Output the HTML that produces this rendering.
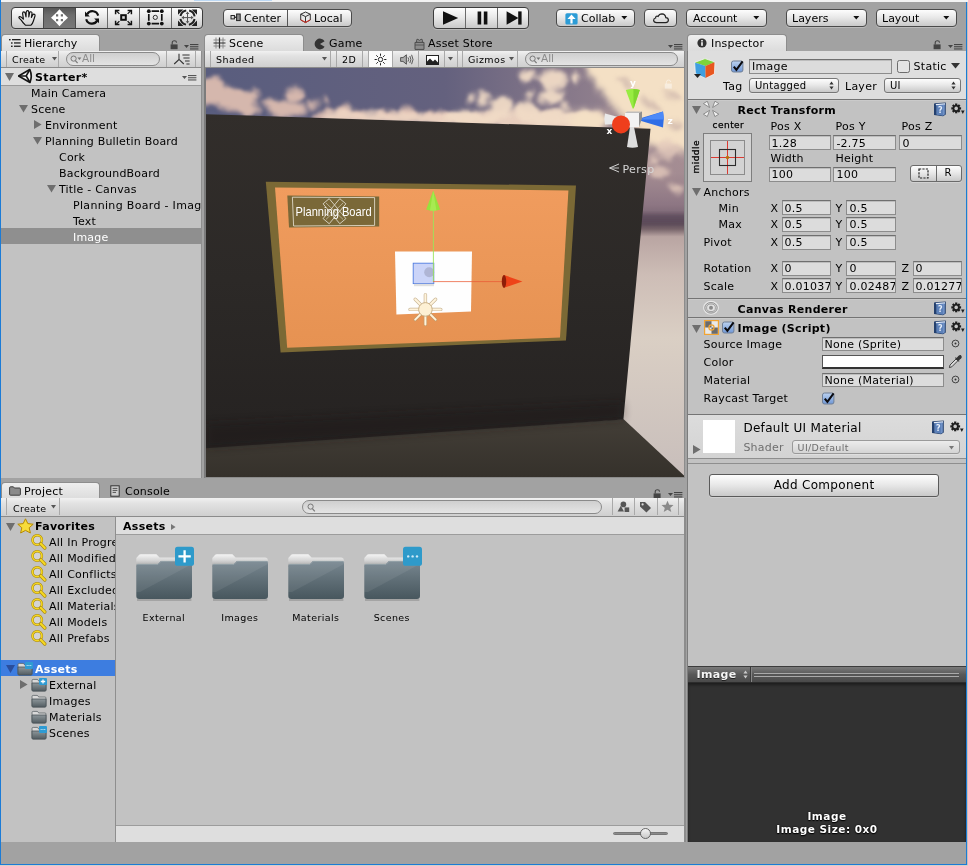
<!DOCTYPE html>
<html>
<head>
<meta charset="utf-8">
<title>Unity - Starter</title>
<style>
html,body{margin:0;padding:0}
body{width:968px;height:866px;position:relative;overflow:hidden;background:#a2a2a2;
 font-family:"DejaVu Sans","Liberation Sans",sans-serif;font-size:11px;color:#000;line-height:1;will-change:transform}
div,span,svg{position:absolute;box-sizing:border-box}
.t{white-space:nowrap;line-height:13px;height:13px}
.b{font-weight:bold}
.s9{font-size:9px}
.s10{font-size:10px}
.btn{border:1px solid #4a4a4a;border-radius:4px;background:linear-gradient(#fdfdfd,#e9e9e9 45%,#c9c9c9);box-shadow:0 1px 0 rgba(255,255,255,.25)}
.panel{background:#c2c2c2}
.tbar{background:linear-gradient(#f1f1f1,#e2e2e2 30%,#cfcfcf);border-bottom:1px solid #8b8b8b}
.tab{background:linear-gradient(#eeeeee,#dcdcdc);border:1px solid #8d8d8d;border-bottom:none;border-radius:4px 4px 0 0}
.fld{background:#dcdcdc;border:1px solid #8c8c8c;border-top-color:#6f6f6f;box-shadow:inset 0 1px 0 #bdbdbd}
.sep{background:#8e8e8e;width:1px}
.srch{background:linear-gradient(#cfcfcf,#e4e4e4);border:1px solid #8a8a8a;border-radius:7px}
.row{left:0;width:100%;height:16px}
</style>
</head>
<body>
<!-- MAIN TOOLBAR -->
<div id="toolbar" style="left:1px;top:2px;width:967px;height:32px">
<!-- transform tools -->
<div class="btn" style="left:10px;top:5px;width:192px;height:22px;overflow:hidden;border-color:#3c3c3c">
 <div style="left:31px;top:0;width:33px;height:20px;background:linear-gradient(#565656,#6c6c6c 35%,#787878)"></div>
 <div class="sep" style="left:31px;top:0;height:20px;background:#4a4a4a"></div>
 <div class="sep" style="left:63px;top:0;height:20px;background:#4a4a4a"></div>
 <div class="sep" style="left:95px;top:0;height:20px;background:#6a6a6a"></div>
 <div class="sep" style="left:127px;top:0;height:20px;background:#6a6a6a"></div>
 <div class="sep" style="left:159px;top:0;height:20px;background:#6a6a6a"></div>
 <svg style="left:0;top:0" width="190" height="20" viewBox="12 8 190 20">
  <!-- hand -->
  <path d="M25.4 25.2 Q23 23 21.4 20.4 L19.2 18.2 Q18.4 16.8 19.8 16.6 Q21 16.6 22.2 18 L23.4 19.2 L22.6 13.4 Q22.6 11.8 23.8 11.8 Q24.8 11.8 25.2 13.2 L26 17 L26.2 12 Q26.4 10.6 27.6 10.6 Q28.8 10.6 28.8 12 L28.8 17 L29.6 12.8 Q30 11.6 31 11.8 Q32.2 12 32 13.4 L31.4 17.4 L32.8 14.8 Q33.4 13.8 34.4 14.2 Q35.4 14.8 35 16 L33.4 21 Q32.6 23.6 31 25.2Z" fill="none" stroke="#111" stroke-width="1.15" stroke-linejoin="round"/>
  <!-- move -->
  <g transform="translate(59.5 17.7)"><path d="M0 -8.5 L4.6 -3.5 H1.3 V-1.3 H3.5 V-4.6 L8.5 0 L3.5 4.6 V1.3 H1.3 V3.5 H4.6 L0 8.5 L-4.6 3.5 H-1.3 V1.3 H-3.5 V4.6 L-8.5 0 L-3.5 -4.6 V-1.3 H-1.3 V-3.5 H-4.6Z" fill="#fff"/></g>
  <!-- rotate -->
  <g fill="none" stroke="#111" stroke-width="2.2">
   <path d="M87.2 14.2 A6 6 0 0 1 98.2 15.6"/>
   <path d="M97.2 20.6 A6 6 0 0 1 86.2 19.2"/>
  </g>
  <path d="M85 11.6 V16.4 H89.8Z" fill="#111"/>
  <path d="M99 23.2 V18.4 H94.2Z" fill="#111"/>
  <!-- scale -->
  <rect x="121.2" y="15.2" width="4.6" height="4.6" fill="#ddd" stroke="#111" stroke-width="2"/>
  <g fill="none" stroke="#111" stroke-width="1.3">
   <path d="M116.4 10.9 L119.4 13.9 M130.6 10.9 L127.6 13.9 M116.4 24.1 L119.4 21.1 M130.6 24.1 L127.6 21.1"/>
   <path d="M115.6 14.2 V10.4 H119.4 M131.4 14.2 V10.4 H127.6 M115.6 20.8 V24.6 H119.4 M131.4 20.8 V24.6 H127.6" stroke-width="1.5"/>
  </g>
  <!-- rect -->
  <g fill="none" stroke="#111">
   <path d="M151.6 11.2 H159 M151.6 23.6 H159 M148.8 14 V20.8 M161.8 14 V20.8" stroke-width="1.7"/>
   <circle cx="155.3" cy="17.4" r="2.1" stroke-width="1" stroke="#333"/>
  </g>
  <g fill="#111"><circle cx="148.8" cy="11.2" r="1.9"/><circle cx="161.8" cy="11.2" r="1.9"/><circle cx="148.8" cy="23.6" r="1.9"/><circle cx="161.8" cy="23.6" r="1.9"/></g>
  <!-- combined -->
  <g fill="none" stroke="#222">
   <circle cx="187.5" cy="17.6" r="7.2" stroke-width="2" stroke-dasharray="8.3 3" stroke-dashoffset="-1.5"/>
   <path d="M187.5 13 V22.2 M182.9 17.6 H192.1" stroke-width="1" stroke="#555"/>
  </g>
  <g fill="#222"><path d="M178 9.4 H183.4 L178 14.8Z M197 9.4 H191.6 L197 14.8Z M178 26 H183.4 L178 20.6Z M197 26 H191.6 L197 20.6Z"/>
   <path d="M187.5 11.6 L189.3 14 H185.7Z M187.5 23.6 L189.3 21.2 H185.7Z M181.5 17.6 L183.9 15.8 V19.4Z M193.5 17.6 L191.1 15.8 V19.4Z" fill="#555"/></g>
 </svg>
</div>
<!-- center / local -->
<div class="btn" style="left:222px;top:7px;width:129px;height:18px"></div>
<div class="sep" style="left:286px;top:8px;height:16px;background:#555"></div>
<svg style="left:229px;top:11px" width="12" height="10" viewBox="0 0 12 10"><rect x="1" y="2.5" width="3.4" height="3.4" fill="#ddd" stroke="#222" stroke-width="1"/><rect x="4.4" y="3.6" width="2" height="1.3" fill="#222"/><rect x="6.6" y="1" width="3.6" height="6.6" fill="#8a8a8a" stroke="#222" stroke-width="1"/></svg>
<span class="t" style="left:243px;top:10px">Center</span>
<svg style="left:298px;top:9px" width="13" height="13" viewBox="0 0 13 13"><path d="M6.5 1 L11.3 3.2 V9 L6.5 11.6 L1.7 9 V3.2Z" fill="#e8e8e8" stroke="#333" stroke-width="1"/><path d="M1.7 3.2 L6.5 5.6 L11.3 3.2 M6.5 5.6 V11.4" fill="none" stroke="#333" stroke-width="1"/><path d="M1.7 8.2 L6.5 10.8 L11.3 8.2 V9.3 L6.5 12 L1.7 9.3Z" fill="#d9362b"/></svg>
<span class="t" style="left:313px;top:10px">Local</span>
<!-- play controls -->
<div class="btn" style="left:432px;top:5px;width:96px;height:22px;border-color:#3c3c3c"></div>
<div class="sep" style="left:464px;top:6px;height:20px;background:#6a6a6a"></div>
<div class="sep" style="left:496px;top:6px;height:20px;background:#6a6a6a"></div>
<svg style="left:433px;top:6px" width="96" height="21" viewBox="0 0 96 21"><g fill="#111"><path d="M9 3.2 L24.2 10 L9 16.8Z"/><rect x="43.6" y="3.5" width="3.6" height="13"/><rect x="49.8" y="3.5" width="3.6" height="13"/><path d="M72.6 3.2 L84.4 10 L72.6 16.8Z"/><rect x="84.2" y="3.4" width="3.4" height="13.2"/></g></svg>
<!-- collab -->
<div class="btn" style="left:555px;top:7px;width:79px;height:18px"></div>
<svg style="left:563.6px;top:10.6px" width="13" height="12" viewBox="0 0 13 12"><rect x="0.4" y="0.2" width="12.2" height="11.4" rx="1.6" fill="#2c9cd6"/><path d="M6.5 1.6 L10.6 6 H7.6 V10.4 H5.4 V6 H2.4Z" fill="#fff"/></svg>
<span class="t" style="left:580px;top:10px">Collab</span>
<svg style="left:620px;top:14px" width="7" height="4" viewBox="0 0 7 4"><path d="M0.3 0 H6.3 L3.3 3.6Z" fill="#111"/></svg>
<!-- cloud -->
<div class="btn" style="left:643px;top:7px;width:33px;height:18px"></div>
<svg style="left:651px;top:10px" width="18" height="12" viewBox="0 0 18 12"><path d="M4.6 10.6 H13.6 Q16.4 10.4 16.4 8 Q16.2 5.8 13.8 5.6 Q13.4 2 10 1.8 Q7.2 1.8 6.2 4.4 Q5.4 3.8 4.4 4.2 Q3.4 4.8 3.6 6 Q1.6 6.4 1.6 8.4 Q1.8 10.4 4.6 10.6Z" fill="none" stroke="#222" stroke-width="1.2"/></svg>
<!-- account / layers / layout -->
<div class="btn" style="left:685px;top:7px;width:81px;height:18px"></div>
<span class="t" style="left:692px;top:10px">Account</span>
<svg style="left:752px;top:14px" width="7" height="4" viewBox="0 0 7 4"><path d="M0.3 0 H6.3 L3.3 3.6Z" fill="#111"/></svg>
<div class="btn" style="left:785px;top:7px;width:81px;height:18px"></div>
<span class="t" style="left:791px;top:10px">Layers</span>
<svg style="left:852px;top:14px" width="7" height="4" viewBox="0 0 7 4"><path d="M0.3 0 H6.3 L3.3 3.6Z" fill="#111"/></svg>
<div class="btn" style="left:875px;top:7px;width:81px;height:18px"></div>
<span class="t" style="left:881px;top:10px">Layout</span>
<svg style="left:942px;top:14px" width="7" height="4" viewBox="0 0 7 4"><path d="M0.3 0 H6.3 L3.3 3.6Z" fill="#111"/></svg>
</div>
<!-- HIERARCHY -->
<div id="hier" style="left:1px;top:34px;width:202px;height:445px">
<div class="tab" style="left:0;top:0;width:99px;height:17px"></div>
<svg style="left:8px;top:5px" width="12" height="9" viewBox="0 0 12 9"><g fill="#222"><rect x="0" y="0" width="1.6" height="1.4"/><rect x="3" y="0" width="8.6" height="1.3"/><rect x="2" y="3.3" width="1.6" height="1.4"/><rect x="5" y="3.3" width="6.6" height="1.3"/><rect x="2" y="6.6" width="1.6" height="1.4"/><rect x="5" y="6.6" width="6.6" height="1.3"/></g></svg>
<span class="t" style="left:23px;top:3px">Hierarchy</span>
<svg style="left:169px;top:6px" width="9" height="10" viewBox="0 0 9 10"><path d="M2.2 4.6 V2.8 Q2.2 0.8 4.4 0.8 Q6.4 0.8 6.6 2.6" fill="none" stroke="#444" stroke-width="1.1"/><rect x="0.6" y="4.4" width="7" height="4.8" fill="#444"/></svg>
<svg style="left:183px;top:10px" width="15" height="6" viewBox="0 0 15 6"><path d="M0 1 H5 L2.5 4Z" fill="#444"/><g fill="#444"><rect x="6" y="0" width="8.4" height="1.1"/><rect x="6" y="2.2" width="8.4" height="1.1"/><rect x="6" y="4.4" width="8.4" height="1.1"/></g></svg>
<div style="left:200px;top:17px;width:1px;height:427px;background:#8f8f8f"></div>
<div class="panel" style="left:0;top:17px;width:200px;height:427px;overflow:hidden">
 <div class="tbar" style="left:0;top:0;width:200px;height:17px"></div>
 <div class="sep" style="left:5px;top:0;height:16px;background:#a9a9a9"></div>
 <span class="t s9" style="left:11px;top:2px;font-size:9.5px;letter-spacing:.3px">Create</span>
 <svg style="left:51px;top:6px" width="5" height="4" viewBox="0 0 5 4"><path d="M0 0 H5 L2.5 3.4Z" fill="#555"/></svg>
 <div class="sep" style="left:57px;top:0;height:16px;background:#a9a9a9"></div>
 <div class="srch" style="left:65px;top:1px;width:94px;height:14px"></div>
 <svg style="left:69px;top:4px" width="12" height="9" viewBox="0 0 12 9"><circle cx="3.6" cy="3.6" r="2.6" fill="none" stroke="#777" stroke-width="1"/><path d="M5.4 5.6 L7.6 8.2" stroke="#777" stroke-width="1.2"/><path d="M7.4 2.6 H11.4 L9.4 5Z" fill="#777"/></svg>
 <span class="t" style="left:81px;top:1px;color:#8c8c8c;font-size:10.5px">All</span>
 <div class="sep" style="left:165px;top:0;height:16px;background:#a9a9a9"></div>
 <svg style="left:172px;top:2px" width="18" height="13" viewBox="0 0 18 13"><g fill="none" stroke="#333" stroke-width="1.1"><path d="M6 0.8 V6.4 L1.2 11 M6 6.4 L10.8 11"/><path d="M9.4 2 H16.6 M10.4 5 H16.6 M12 8 H16.6 M13.4 11 H16.6"/></g></svg>
 <div class="sep" style="left:194px;top:0;height:16px;background:#a9a9a9"></div>
 <!-- scene header row -->
 <div style="left:0;top:17px;width:200px;height:18px;background:#dedede;border-bottom:1px solid #9a9a9a"></div>
 <svg style="left:4px;top:22px" width="9" height="8" viewBox="0 0 9 8"><path d="M0 0 H9 L4.5 8Z" fill="#6e6e6e"/></svg>
 <svg style="left:17px;top:17px" width="16" height="16" viewBox="18 68 16 16"><path d="M18.6 76 L29.8 69.6 Q32.6 76 30 82.4Z" fill="#f6f6f6" stroke="#151515" stroke-width="1.7" stroke-linejoin="round"/><path d="M18.6 76 H26.2 L29.8 69.6 M26.2 76 L30 82.4" fill="none" stroke="#151515" stroke-width="1.6"/></svg>
 <span class="t b" style="left:34px;top:20px;letter-spacing:.35px">Starter*</span>
 <svg style="left:181px;top:24px" width="15" height="6" viewBox="0 0 15 6"><path d="M0 1 H5 L2.5 4Z" fill="#555"/><g fill="#555"><rect x="6" y="0" width="8.4" height="1.1"/><rect x="6" y="2.2" width="8.4" height="1.1"/><rect x="6" y="4.4" width="8.4" height="1.1"/></g></svg>
 <span class="t" style="left:30px;top:36px;letter-spacing:.2px">Main Camera</span>
 <svg style="left:18px;top:54px" width="9" height="8" viewBox="0 0 9 8"><path d="M0 0 H9 L4.5 7.6Z" fill="#6e6e6e"/></svg>
 <span class="t" style="left:30px;top:52px;letter-spacing:.2px">Scene</span>
 <svg style="left:33px;top:69px" width="8" height="9" viewBox="0 0 8 9"><path d="M0 0 V9 L7.6 4.5Z" fill="#6e6e6e"/></svg>
 <span class="t" style="left:44px;top:68px;letter-spacing:.2px">Environment</span>
 <svg style="left:32px;top:86px" width="9" height="8" viewBox="0 0 9 8"><path d="M0 0 H9 L4.5 7.6Z" fill="#6e6e6e"/></svg>
 <span class="t" style="left:44px;top:84px;letter-spacing:.2px">Planning Bulletin Board</span>
 <span class="t" style="left:58px;top:100px;letter-spacing:.2px">Cork</span>
 <span class="t" style="left:58px;top:116px;letter-spacing:.2px">BackgroundBoard</span>
 <svg style="left:46px;top:134px" width="9" height="8" viewBox="0 0 9 8"><path d="M0 0 H9 L4.5 7.6Z" fill="#6e6e6e"/></svg>
 <span class="t" style="left:58px;top:132px;letter-spacing:.2px">Title - Canvas</span>
 <span class="t" style="left:72px;top:148px;letter-spacing:.32px">Planning Board - Image</span>
 <span class="t" style="left:72px;top:164px;letter-spacing:.2px">Text</span>
 <div style="left:0;top:177px;width:200px;height:16px;background:#8f8f8f"></div>
 <span class="t" style="left:72px;top:180px;letter-spacing:.2px;color:#fff">Image</span>
</div>
</div>
<!-- SCENE -->
<div id="scene" style="left:205px;top:34px;width:481px;height:445px">
<!-- tabs -->
<div class="tab" style="left:-1px;top:0;width:100px;height:17px"></div>
<svg style="left:8px;top:3px" width="13" height="13" viewBox="213 37 13 13"><path d="M216 37.5 V48.5 M223 37.5 V48.5 M213.5 40 H225.5 M213.5 46 H225.5" stroke="#8a8a8a" stroke-width="1" fill="none"/><path d="M219.5 37.5 V48.5 M213.5 43 H225.5" stroke="#2e2e2e" stroke-width="1.2" fill="none"/></svg>
<span class="t" style="left:24px;top:3px;letter-spacing:.2px">Scene</span>
<svg style="left:109px;top:4px" width="12" height="12" viewBox="0 0 12 12"><path d="M6 6 L10.6 3.2 A5.4 5.4 0 1 0 10.6 8.8Z" fill="#333"/></svg>
<span class="t" style="left:124px;top:3px;letter-spacing:.2px">Game</span>
<svg style="left:209px;top:4px" width="11" height="12" viewBox="0 0 11 12"><path d="M1 4.4 H10 V11.4 H1Z M2.6 4.4 V2.2 Q2.6 0.8 4 1.4 L5.4 2.4 L7 1.4 Q8.4 0.8 8.4 2.2 V4.4" fill="#8d8d8d" stroke="#4d4d4d" stroke-width="1"/><path d="M1 7 H10" stroke="#4d4d4d" stroke-width=".8"/></svg>
<span class="t" style="left:223px;top:3px;letter-spacing:.2px">Asset Store</span>
<svg style="left:463px;top:10px" width="15" height="6" viewBox="0 0 15 6"><path d="M0 1 H5 L2.5 4Z" fill="#444"/><g fill="#444"><rect x="6" y="0" width="8.4" height="1.1"/><rect x="6" y="2.2" width="8.4" height="1.1"/><rect x="6" y="4.4" width="8.4" height="1.1"/></g></svg>
<div style="left:-1px;top:17px;width:2px;height:427px;background:#7c7c7c"></div>
<div style="left:479px;top:17px;width:1px;height:427px;background:#8c8c8c"></div>
<div style="left:0;top:443px;width:480px;height:1px;background:#8c8c8c"></div>
<!-- toolbar -->
<div class="tbar" style="left:0;top:17px;width:479px;height:17px"></div>
<div class="sep" style="left:5px;top:17px;height:16px;background:#a9a9a9"></div>
<span class="t" style="left:11px;top:19px;font-size:9.5px;letter-spacing:.45px">Shaded</span>
<svg style="left:117px;top:23px" width="5" height="4" viewBox="0 0 5 4"><path d="M0 0 H5 L2.5 3.4Z" fill="#555"/></svg>
<div class="sep" style="left:125px;top:17px;height:16px;background:#a9a9a9"></div>
<div class="sep" style="left:131px;top:17px;height:16px;background:#a9a9a9"></div>
<span class="t" style="left:137px;top:19px;font-size:9.5px;letter-spacing:.45px">2D</span>
<div class="sep" style="left:157px;top:17px;height:16px;background:#a9a9a9"></div>
<div style="left:163px;top:17px;width:25px;height:16px;background:#fbfbfb;border-left:1px solid #a9a9a9;border-right:1px solid #a9a9a9"></div>
<svg style="left:169px;top:19px" width="13" height="13" viewBox="0 0 13 13"><circle cx="6.5" cy="6.5" r="2.2" fill="none" stroke="#222" stroke-width="1"/><g stroke="#222" stroke-width="1"><path d="M6.5 0.6 V2.8 M6.5 10.2 V12.4 M0.6 6.5 H2.8 M10.2 6.5 H12.4 M2.3 2.3 L3.9 3.9 M9.1 9.1 L10.7 10.7 M2.3 10.7 L3.9 9.1 M9.1 3.9 L10.7 2.3"/></g></svg>
<svg style="left:195px;top:20px" width="14" height="11" viewBox="0 0 14 11"><path d="M0.6 3.6 H3 L6.4 0.8 V10.2 L3 7.4 H0.6Z" fill="#ababab" stroke="#4a4a4a" stroke-width=".9"/><path d="M8 3.4 Q9.4 5.5 8 7.6 M9.8 2 Q12 5.5 9.8 9 M11.6 0.8 Q14.4 5.5 11.6 10.2" fill="none" stroke="#4a4a4a" stroke-width=".9"/></svg>
<div class="sep" style="left:213px;top:17px;height:16px;background:#a9a9a9"></div>
<svg style="left:221px;top:21px" width="13" height="10" viewBox="0 0 13 10"><rect x="0.5" y="0.5" width="12" height="9" fill="#fff" stroke="#222" stroke-width="1"/><path d="M1 9 V6.4 L4 3.4 L7 6.4 L9 4.6 L12 7.4 V9Z" fill="#222"/></svg>
<div class="sep" style="left:239px;top:17px;height:16px;background:#a9a9a9"></div>
<svg style="left:243px;top:23px" width="5" height="4" viewBox="0 0 5 4"><path d="M0 0 H5 L2.5 3.4Z" fill="#555"/></svg>
<div class="sep" style="left:252px;top:17px;height:16px;background:#a9a9a9"></div>
<div class="sep" style="left:257px;top:17px;height:16px;background:#a9a9a9"></div>
<span class="t" style="left:263px;top:19px;font-size:9.5px;letter-spacing:.45px">Gizmos</span>
<svg style="left:304px;top:23px" width="5" height="4" viewBox="0 0 5 4"><path d="M0 0 H5 L2.5 3.4Z" fill="#555"/></svg>
<div class="sep" style="left:312px;top:17px;height:16px;background:#a9a9a9"></div>
<div class="srch" style="left:320px;top:18px;width:153px;height:14px"></div>
<svg style="left:324px;top:21px" width="12" height="9" viewBox="0 0 12 9"><circle cx="3.6" cy="3.6" r="2.6" fill="none" stroke="#777" stroke-width="1"/><path d="M5.4 5.6 L7.6 8.2" stroke="#777" stroke-width="1.2"/><path d="M7.4 2.6 H11.4 L9.4 5Z" fill="#777"/></svg>
<span class="t" style="left:336px;top:18px;color:#8c8c8c;font-size:10.5px">All</span>

<!-- scene view -->
<svg style="left:1px;top:34px" width="478" height="409" viewBox="206 68 478 409">
 <defs>
  <linearGradient id="sky" x1="206" y1="0" x2="684" y2="0" gradientUnits="userSpaceOnUse">
   <stop offset="0" stop-color="#595d7e"/><stop offset=".5" stop-color="#64617e"/><stop offset=".74" stop-color="#857789"/><stop offset="1" stop-color="#a48e94"/>
  </linearGradient>
  <linearGradient id="skyv" x1="0" y1="120" x2="0" y2="226" gradientUnits="userSpaceOnUse">
   <stop offset="0" stop-color="#a89096" stop-opacity="0"/><stop offset=".5" stop-color="#a48c92" stop-opacity=".9"/><stop offset=".8" stop-color="#8d7683" stop-opacity="1"/><stop offset="1" stop-color="#6a5866" stop-opacity="1"/>
  </linearGradient>
  <linearGradient id="gnd" x1="0" y1="224" x2="0" y2="477" gradientUnits="userSpaceOnUse">
   <stop offset="0" stop-color="#5f4e5a"/><stop offset=".02" stop-color="#77646a"/><stop offset=".05" stop-color="#b9a5a2"/><stop offset=".2" stop-color="#cdbdb6"/><stop offset=".45" stop-color="#dacfc4"/><stop offset="1" stop-color="#c8bebb"/>
  </linearGradient>
  <linearGradient id="wall" x1="0" y1="110" x2="0" y2="450" gradientUnits="userSpaceOnUse">
   <stop offset="0" stop-color="#322e2b"/><stop offset=".5" stop-color="#2c2927"/><stop offset="1" stop-color="#252221"/>
  </linearGradient>
  <linearGradient id="floor" x1="0" y1="420" x2="0" y2="477" gradientUnits="userSpaceOnUse">
   <stop offset="0" stop-color="#433e37"/><stop offset="1" stop-color="#35312b"/>
  </linearGradient>
  <linearGradient id="cork" x1="0" y1="187" x2="0" y2="348" gradientUnits="userSpaceOnUse">
   <stop offset="0" stop-color="#f09c5e"/><stop offset="1" stop-color="#e69252"/>
  </linearGradient>
  <filter id="b4" x="-30%" y="-30%" width="160%" height="160%"><feGaussianBlur stdDeviation="4"/></filter>
  <filter id="b2" x="-30%" y="-30%" width="160%" height="160%"><feGaussianBlur stdDeviation="2.2"/></filter>
  <filter id="b1" x="-30%" y="-30%" width="160%" height="160%"><feGaussianBlur stdDeviation="1"/></filter>
  <filter id="cl" x="-10%" y="-40%" width="120%" height="180%"><feTurbulence type="fractalNoise" baseFrequency="0.07" numOctaves="3" seed="4" result="n"/><feDisplacementMap in="SourceGraphic" in2="n" scale="16" xChannelSelector="R" yChannelSelector="G"/><feGaussianBlur stdDeviation="1.5"/></filter>
  <filter id="cl2" filterUnits="userSpaceOnUse" x="196" y="58" width="500" height="180">
   <feTurbulence type="fractalNoise" baseFrequency="0.035 0.055" numOctaves="3" seed="11" result="n"/>
   <feColorMatrix in="n" type="matrix" values="0 0 0 0 1  0 0 0 0 1  0 0 0 0 1  2.2 0 0 0 -0.45" result="na"/>
   <feGaussianBlur in="SourceGraphic" stdDeviation="3.5" result="m"/>
   <feComposite in="na" in2="m" operator="arithmetic" k1="1" k2="0" k3="0" k4="0" result="c"/>
   <feComponentTransfer in="c"><feFuncA type="linear" slope="3" intercept="-0.45"/></feComponentTransfer>
   <feGaussianBlur stdDeviation="1.1"/>
  </filter>
  <filter id="cl3" filterUnits="userSpaceOnUse" x="196" y="58" width="500" height="180">
   <feTurbulence type="fractalNoise" baseFrequency="0.04 0.06" numOctaves="4" seed="3" result="n"/>
   <feColorMatrix in="n" type="matrix" values="0 0 0 0 1  0 0 0 0 1  0 0 0 0 1  2.0 0 0 0 0.15" result="na"/>
   <feGaussianBlur in="SourceGraphic" stdDeviation="4" result="m"/>
   <feComposite in="na" in2="m" operator="arithmetic" k1="1" k2="0" k3="0" k4="0" result="c"/>
   <feComponentTransfer in="c"><feFuncA type="linear" slope="3" intercept="-0.5"/></feComponentTransfer>
   <feGaussianBlur stdDeviation="1.2"/>
  </filter>
  <filter id="cw" filterUnits="userSpaceOnUse" x="196" y="58" width="500" height="180"><feGaussianBlur in="SourceGraphic" stdDeviation="2" result="m"/><feTurbulence type="fractalNoise" baseFrequency="0.07" numOctaves="2" seed="5" result="n"/><feDisplacementMap in="m" in2="n" scale="9" xChannelSelector="R" yChannelSelector="G"/><feGaussianBlur stdDeviation=".8"/></filter>
  <filter id="cw2" filterUnits="userSpaceOnUse" x="196" y="58" width="500" height="180"><feGaussianBlur in="SourceGraphic" stdDeviation="3.2" result="m"/><feTurbulence type="fractalNoise" baseFrequency="0.05" numOctaves="2" seed="9" result="n"/><feDisplacementMap in="m" in2="n" scale="14" xChannelSelector="R" yChannelSelector="G"/><feGaussianBlur stdDeviation="1"/></filter>
  <clipPath id="vp"><rect x="206" y="68" width="478" height="409"/></clipPath>
 </defs>
 <g clip-path="url(#vp)">
 <!-- sky -->
 <rect x="206" y="68" width="478" height="160" fill="url(#sky)"/>
 <rect x="560" y="120" width="130" height="110" fill="url(#skyv)"/>
 <!-- clouds -->
 <g filter="url(#cw)" fill="#7b7088" opacity=".55" transform="translate(1.5,3)"><ellipse cx="209.7" cy="89" rx="12" ry="14"/><ellipse cx="227" cy="96.5" rx="16" ry="11"/><ellipse cx="243" cy="101.5" rx="12" ry="10"/><ellipse cx="253" cy="92.8" rx="5" ry="5"/><ellipse cx="247" cy="109" rx="10" ry="6"/><ellipse cx="292.7" cy="92.8" rx="11" ry="6.5"/><ellipse cx="268" cy="102" rx="8" ry="5"/><ellipse cx="285.3" cy="107.7" rx="20" ry="8"/><ellipse cx="311.3" cy="102.7" rx="5" ry="4"/><ellipse cx="318.8" cy="115.7" rx="8" ry="4"/><ellipse cx="323.7" cy="99" rx="3" ry="3"/><ellipse cx="327" cy="111" rx="4" ry="5"/><ellipse cx="340.9" cy="110" rx="7" ry="7"/><ellipse cx="357" cy="113.8" rx="9" ry="6"/><ellipse cx="384" cy="115" rx="11" ry="5"/><ellipse cx="406.5" cy="112.6" rx="10" ry="7"/><ellipse cx="428.8" cy="114.5" rx="8" ry="6"/><ellipse cx="442.5" cy="115.7" rx="8" ry="5"/><ellipse cx="462" cy="115.7" rx="18" ry="8"/><ellipse cx="469.5" cy="96.5" rx="3.5" ry="5"/><ellipse cx="481.3" cy="97.7" rx="4.5" ry="8"/><ellipse cx="499.3" cy="105" rx="12" ry="11"/><ellipse cx="486.9" cy="117.6" rx="12" ry="5"/><ellipse cx="525.3" cy="110" rx="12" ry="10"/><ellipse cx="548.8" cy="116.3" rx="20" ry="8"/><ellipse cx="526.5" cy="74" rx="9" ry="6"/><ellipse cx="551" cy="78" rx="14" ry="10"/><ellipse cx="550" cy="95" rx="13" ry="7"/><ellipse cx="527.8" cy="93.4" rx="3" ry="5"/><ellipse cx="563" cy="105" rx="4" ry="4"/><ellipse cx="578" cy="118" rx="16" ry="9"/><ellipse cx="575" cy="76" rx="5" ry="5"/></g>
 <g filter="url(#cw)" fill="#e7c5b4" opacity=".86" transform="translate(1.5,1.5)"><ellipse cx="209.7" cy="89" rx="12" ry="14"/><ellipse cx="227" cy="96.5" rx="16" ry="11"/><ellipse cx="243" cy="101.5" rx="12" ry="10"/><ellipse cx="253" cy="92.8" rx="5" ry="5"/><ellipse cx="247" cy="109" rx="10" ry="6"/><ellipse cx="292.7" cy="92.8" rx="11" ry="6.5"/><ellipse cx="268" cy="102" rx="8" ry="5"/><ellipse cx="285.3" cy="107.7" rx="20" ry="8"/><ellipse cx="311.3" cy="102.7" rx="5" ry="4"/><ellipse cx="318.8" cy="115.7" rx="8" ry="4"/><ellipse cx="323.7" cy="99" rx="3" ry="3"/><ellipse cx="327" cy="111" rx="4" ry="5"/><ellipse cx="340.9" cy="110" rx="7" ry="7"/><ellipse cx="357" cy="113.8" rx="9" ry="6"/><ellipse cx="384" cy="115" rx="11" ry="5"/><ellipse cx="406.5" cy="112.6" rx="10" ry="7"/><ellipse cx="428.8" cy="114.5" rx="8" ry="6"/><ellipse cx="442.5" cy="115.7" rx="8" ry="5"/></g>
 <g filter="url(#cw)" fill="#eed4c2" opacity=".95" transform="translate(1.5,1.5)"><polygon points="322,113 340,107 360,110 384,112 406,109 430,111 446,111 470,111 500,109 530,109 560,111 600,109 600,130 322,120"/></g>
 <g filter="url(#cw)" fill="#f1dbc6" opacity=".95" transform="translate(1.5,1.5)"><ellipse cx="462" cy="115.7" rx="18" ry="8"/><ellipse cx="469.5" cy="96.5" rx="3.5" ry="5"/><ellipse cx="481.3" cy="97.7" rx="4.5" ry="8"/><ellipse cx="499.3" cy="105" rx="12" ry="11"/><ellipse cx="486.9" cy="117.6" rx="12" ry="5"/><ellipse cx="525.3" cy="110" rx="12" ry="10"/><ellipse cx="548.8" cy="116.3" rx="20" ry="8"/><ellipse cx="526.5" cy="74" rx="9" ry="6"/><ellipse cx="551" cy="78" rx="14" ry="10"/><ellipse cx="550" cy="95" rx="13" ry="7"/><ellipse cx="527.8" cy="93.4" rx="3" ry="5"/><ellipse cx="563" cy="105" rx="4" ry="4"/><ellipse cx="578" cy="118" rx="16" ry="9"/><ellipse cx="575" cy="76" rx="5" ry="5"/></g>
 <g filter="url(#cw2)" fill="#f4e0c5"><polygon points="578,50 710,50 710,160 650,146 630,126 614,106 596,86"/><ellipse cx="590" cy="120" rx="20" ry="12"/></g>
 <g filter="url(#cw)" fill="#c9aea6" opacity=".0"></g>
 <g filter="url(#cw)" fill="#b89f9e" opacity=".5"><ellipse cx="626" cy="84" rx="9" ry="3" transform="rotate(35 626 84)"/><ellipse cx="650" cy="104" rx="12" ry="3.5" transform="rotate(35 650 104)"/><ellipse cx="672" cy="96" rx="10" ry="3" transform="rotate(30 672 96)"/><ellipse cx="675" cy="125" rx="8" ry="4"/><ellipse cx="610" cy="112" rx="8" ry="3" transform="rotate(30 610 112)"/></g>
 <g filter="url(#cw)" fill="#e3c9bb" opacity=".8"><ellipse cx="668" cy="150" rx="12" ry="9"/><ellipse cx="660" cy="172" rx="10" ry="6"/><ellipse cx="676" cy="188" rx="8" ry="5"/><ellipse cx="652" cy="160" rx="6" ry="5"/></g>
 <!-- horizon + ground (visible right of wall) -->
 <rect x="600" y="219" width="90" height="260" fill="url(#gnd)"/>
 <rect x="600" y="214" width="90" height="9" fill="#5d4c5c" filter="url(#b2)" opacity=".9"/>
 <!-- floor -->
 <polygon points="206,447 623.4,419 684.5,476 684.5,478 206,478" fill="url(#floor)"/>
 <!-- wall -->
 <polygon points="206,114.2 650.5,128.8 623.4,419.6 206,448.2" fill="url(#wall)"/>
 <polygon points="206,424 623.4,402 623.4,419.6 206,448.2" fill="#1a1817" opacity=".4" filter="url(#b4)"/>
 <!-- board frame -->
 <polygon points="265.8,181.8 576,185.4 566,340.4 280.6,352.4" fill="#7b6935"/>
 <polygon points="275,187.4 568.4,190.4 560,337.6 287.2,347.8" fill="url(#cork)"/>
 <!-- title label -->
 <polygon points="287.3,195.6 379.2,196.4 379.2,226.6 289,227.4" fill="#7a6838"/>
 <polygon points="292.4,197.2 374.6,197.6 374.6,225.4 293.6,226" fill="none" stroke="#e9e4d6" stroke-width=".9" opacity=".9"/>
 <text x="295.6" y="215.8" font-family="Liberation Sans, sans-serif" font-size="13" fill="#fff" textLength="76" lengthAdjust="spacingAndGlyphs">Planning Board</text>
 <g fill="none" stroke="#f4f1ea" stroke-width=".8" opacity=".85">
  <rect x="321.5" y="207.2" width="26" height="8" transform="rotate(50 334.5 211.2)"/>
  <rect x="321.5" y="207.2" width="26" height="8" transform="rotate(-50 334.5 211.2)"/>
  <path d="M326 203 L343 219.4 M343 203 L326 219.4" stroke-width=".6"/>
 </g>
 <!-- white image -->
 <polygon points="395,251.4 472,251.4 471,311.6 396.4,314.6" fill="#fefefe"/>
 <!-- rect handle -->
 <rect x="413.2" y="263.2" width="20.6" height="20.4" fill="#b9c6f6" fill-opacity=".75" stroke="#4f7be0" stroke-width=".9"/>
 <rect x="414" y="283.8" width="20" height="2.4" fill="#d8d8d8" opacity=".8"/>
 <circle cx="429.2" cy="272.2" r="5" fill="#a3a8c6" opacity=".7"/>
 <!-- axes -->
 <path d="M433.4 282 V209" stroke="#9be35a" stroke-width=".9"/>
 <path d="M433.2 190.6 L440.2 209.4 Q433.2 212 426.2 209.4Z" fill="#96e23c"/>
 <path d="M433.2 190.6 L436.4 210.4 Q433.2 211 430 210.4Z" fill="#b4f060" opacity=".6"/>
 <path d="M433.2 281.6 H504" stroke="#ea5a34" stroke-width="1" opacity=".75"/>
 <path d="M522.4 281.4 L504 275 Q501.6 281.4 504 287.8Z" fill="#ee4318"/>
 <ellipse cx="504" cy="281.4" rx="2.2" ry="6.4" fill="#8e1e08"/>
 <!-- sun gizmo -->
 <path d="M425.4 294.6 V324.4 M410 309.4 H440.8 M415.2 299.2 L435.6 319.6 M415.2 319.6 L435.6 299.2" stroke="#b59a6e" stroke-width="3.4" stroke-linecap="round" opacity=".7"/>
 <path d="M425.4 294.6 V324.4 M410 309.4 H440.8 M415.2 299.2 L435.6 319.6 M415.2 319.6 L435.6 299.2" stroke="#fff4dc" stroke-width="2" stroke-linecap="round"/>
 <circle cx="425.4" cy="309.4" r="6.8" fill="#fdf0d4" stroke="#c4aa80" stroke-width=".9"/>
 <!-- orientation gizmo -->
 <path d="M605 113.6 L622 118 V124 L605 124.6 Q603.6 119 605 113.6Z" fill="#e9e9e9"/>
 <path d="M627 147 Q632.4 148.6 638 147 L634 127 H630Z" fill="#dedede"/>
 <path d="M625.8 90 Q632.8 88 639.8 90 L633.6 108.6 H632.6Z" fill="#98ec42"/>
 <path d="M633.4 89 Q636.8 89.2 639.8 90 L633.6 108.6Z" fill="#7fd630"/>
 <path d="M663 111.6 Q664.6 119.6 663 127.4 L639.6 120.4 V118.6Z" fill="#2f6de6"/>
 <path d="M663 111.6 Q663.8 115.6 663.8 119.6 L639.6 119.4Z" fill="#4d8af8"/>
 <rect x="625" y="113" width="14" height="14" fill="#f3f3f3"/>
 <path d="M625 113 L627 111.4 H642 L639 113Z" fill="#bdbdbd"/><path d="M639 113 L642 111.4 V118.4 L639 127Z" fill="#8f8f8f"/>
 <circle cx="621" cy="124.4" r="9" fill="#ef3e1c"/>
 <text x="630" y="85.6" font-size="9" font-weight="bold" fill="#fff">y</text>
 <text x="667.4" y="123.6" font-size="9" font-weight="bold" fill="#fff">z</text>
 <text x="606.4" y="134.4" font-size="9" font-weight="bold" fill="#fff">x</text>
 <path d="M619 164 L609.6 168 L619 172" fill="none" stroke="#d2d2d2" stroke-width="1"/>
 <path d="M609.6 168 H619" stroke="#d2d2d2" stroke-width=".9"/>
 <text x="622.4" y="172.6" font-size="11" fill="#d6d6d6" letter-spacing=".4">Persp</text>
 <!-- lock -->
 <g opacity=".45"><path d="M666.4 84 V82.4 Q666.4 80 668.6 80 Q670.6 80 670.8 82" fill="none" stroke="#fff" stroke-width="1"/><rect x="664.8" y="83.6" width="7" height="5" fill="#fff"/></g>
 </g>
</svg>
</div>
<!-- PROJECT -->
<div id="project" style="left:1px;top:482px;width:685px;height:360px">
<div class="tab" style="left:0;top:0;width:99px;height:17px"></div>
<svg style="left:8px;top:4px" width="12" height="10" viewBox="0 0 12 10"><path d="M0.6 1.8 Q0.6 0.8 1.6 0.8 H4.4 L5.4 2 H10.6 Q11.4 2 11.4 3 V8.4 Q11.4 9.2 10.6 9.2 H1.4 Q0.6 9.2 0.6 8.4Z" fill="#8b8b8b" stroke="#3e3e3e" stroke-width="1"/></svg>
<span class="t" style="left:23px;top:3px;letter-spacing:.2px">Project</span>
<svg style="left:109px;top:3px" width="10" height="12" viewBox="0 0 10 12"><rect x="0.8" y="0.8" width="8.4" height="10.4" fill="#cfcfcf" stroke="#333" stroke-width="1"/><path d="M2.6 3.4 H7.4 M2.6 5.4 H7.4 M2.6 7.4 H6" stroke="#333" stroke-width=".8"/></svg>
<span class="t" style="left:124px;top:3px;letter-spacing:.2px">Console</span>
<svg style="left:652px;top:7px" width="9" height="10" viewBox="0 0 9 10"><path d="M2.2 4.6 V2.8 Q2.2 0.8 4.4 0.8 Q6.4 0.8 6.6 2.6" fill="none" stroke="#444" stroke-width="1.1"/><rect x="0.6" y="4.4" width="7" height="4.8" fill="#444"/></svg><svg style="left:667px;top:10px" width="15" height="6" viewBox="0 0 15 6"><path d="M0 1 H5 L2.5 4Z" fill="#444"/><g fill="#444"><rect x="6" y="0" width="8.4" height="1.1"/><rect x="6" y="2.2" width="8.4" height="1.1"/><rect x="6" y="4.4" width="8.4" height="1.1"/></g></svg>
<div style="left:683px;top:16px;width:2px;height:344px;background:#8c8c8c"></div>
<div class="panel" style="left:0;top:16px;width:683px;height:344px;overflow:hidden">
 <div class="tbar" style="left:0;top:0;width:683px;height:19px"></div>
 <div class="sep" style="left:5px;top:0;height:17px;background:#a9a9a9"></div>
 <span class="t" style="left:12px;top:4px;font-size:9.5px;letter-spacing:.3px">Create</span>
 <svg style="left:50px;top:7px" width="5" height="4" viewBox="0 0 5 4"><path d="M0 0 H5 L2.5 3.4Z" fill="#555"/></svg>
 <div class="sep" style="left:58px;top:0;height:17px;background:#a9a9a9"></div>
 <div class="srch" style="left:301px;top:2px;width:300px;height:14px"></div>
 <svg style="left:306px;top:5px" width="9" height="9" viewBox="0 0 9 9"><circle cx="3.6" cy="3.6" r="2.6" fill="none" stroke="#777" stroke-width="1"/><path d="M5.4 5.6 L7.8 8.4" stroke="#777" stroke-width="1.2"/></svg>
 <div class="sep" style="left:611px;top:0;height:17px;background:#a9a9a9"></div>
 <div class="sep" style="left:633px;top:0;height:17px;background:#a9a9a9"></div>
 <div class="sep" style="left:656px;top:0;height:17px;background:#a9a9a9"></div>
 <div class="sep" style="left:677px;top:0;height:17px;background:#a9a9a9"></div>
 <svg style="left:616px;top:3px" width="13" height="12" viewBox="0 0 13 12"><circle cx="6.4" cy="3.4" r="2.8" fill="#555"/><path d="M0.6 10.6 L3.8 4.8 L7 10.6Z" fill="#555"/><rect x="7.6" y="6.4" width="4.6" height="4.6" fill="#555"/></svg>
 <svg style="left:638px;top:3px" width="13" height="12" viewBox="0 0 13 12"><path d="M1 1 H6 L12 7 L7.4 11.6 L1 5.4Z" fill="#555"/><circle cx="3.6" cy="3.4" r="1.1" fill="#ddd"/></svg>
 <svg style="left:660px;top:2px" width="13" height="13" viewBox="0 0 13 13"><path d="M6.5 0.8 L8.2 4.8 L12.5 5.1 L9.2 7.9 L10.3 12.1 L6.5 9.8 L2.7 12.1 L3.8 7.9 L0.5 5.1 L4.8 4.8Z" fill="#8a8a8a"/></svg>
 <div style="left:114px;top:18px;width:1px;height:326px;background:#8e8e8e"></div>
 <div style="left:115px;top:19px;width:568px;height:18px;background:#dedede;border-bottom:1px solid #9c9c9c"></div>
 <span class="t b" style="left:122px;top:22px;letter-spacing:.3px">Assets</span>
 <svg style="left:170px;top:26px" width="5" height="6" viewBox="0 0 5 6"><path d="M0 0 V6 L4.6 3Z" fill="#777"/></svg>
 <svg style="left:5px;top:25px" width="9" height="8" viewBox="0 0 9 8"><path d="M0 0 H9 L4.5 8Z" fill="#6e6e6e"/></svg>
 <svg style="left:16px;top:20px" width="17" height="16" viewBox="0 0 17 16"><path d="M8.5 0.8 L10.8 5.6 L16.2 6.2 L12.2 9.8 L13.4 15 L8.5 12.4 L3.6 15 L4.8 9.8 L0.8 6.2 L6.2 5.6Z" fill="#f7dc3a" stroke="#b68a00" stroke-width="1"/></svg>
 <span class="t b" style="left:34px;top:22px;letter-spacing:.3px">Favorites</span>
 <svg style="left:30px;top:36px" width="16" height="16" viewBox="0 0 16 16"><circle cx="6.2" cy="6" r="4.7" fill="#dcdcdc" fill-opacity=".7" stroke="#a8870a" stroke-width="2.5"/><circle cx="6.2" cy="6" r="4.7" fill="none" stroke="#f6d822" stroke-width="1.5"/><path d="M9.8 9.8 L13.8 14" stroke="#a8870a" stroke-width="3.3" stroke-linecap="round"/><path d="M9.8 9.8 L13.8 14" stroke="#f6d822" stroke-width="2.1" stroke-linecap="round"/></svg>
 <span class="t" style="left:48px;top:38px;letter-spacing:.25px;width:66px;overflow:hidden">All In Progress</span>
 <svg style="left:30px;top:52px" width="16" height="16" viewBox="0 0 16 16"><circle cx="6.2" cy="6" r="4.7" fill="#dcdcdc" fill-opacity=".7" stroke="#a8870a" stroke-width="2.5"/><circle cx="6.2" cy="6" r="4.7" fill="none" stroke="#f6d822" stroke-width="1.5"/><path d="M9.8 9.8 L13.8 14" stroke="#a8870a" stroke-width="3.3" stroke-linecap="round"/><path d="M9.8 9.8 L13.8 14" stroke="#f6d822" stroke-width="2.1" stroke-linecap="round"/></svg>
 <span class="t" style="left:48px;top:54px;letter-spacing:.25px;width:66px;overflow:hidden">All Modified</span>
 <svg style="left:30px;top:68px" width="16" height="16" viewBox="0 0 16 16"><circle cx="6.2" cy="6" r="4.7" fill="#dcdcdc" fill-opacity=".7" stroke="#a8870a" stroke-width="2.5"/><circle cx="6.2" cy="6" r="4.7" fill="none" stroke="#f6d822" stroke-width="1.5"/><path d="M9.8 9.8 L13.8 14" stroke="#a8870a" stroke-width="3.3" stroke-linecap="round"/><path d="M9.8 9.8 L13.8 14" stroke="#f6d822" stroke-width="2.1" stroke-linecap="round"/></svg>
 <span class="t" style="left:48px;top:70px;letter-spacing:.25px;width:66px;overflow:hidden">All Conflicts</span>
 <svg style="left:30px;top:84px" width="16" height="16" viewBox="0 0 16 16"><circle cx="6.2" cy="6" r="4.7" fill="#dcdcdc" fill-opacity=".7" stroke="#a8870a" stroke-width="2.5"/><circle cx="6.2" cy="6" r="4.7" fill="none" stroke="#f6d822" stroke-width="1.5"/><path d="M9.8 9.8 L13.8 14" stroke="#a8870a" stroke-width="3.3" stroke-linecap="round"/><path d="M9.8 9.8 L13.8 14" stroke="#f6d822" stroke-width="2.1" stroke-linecap="round"/></svg>
 <span class="t" style="left:48px;top:86px;letter-spacing:.25px;width:66px;overflow:hidden">All Excluded</span>
 <svg style="left:30px;top:100px" width="16" height="16" viewBox="0 0 16 16"><circle cx="6.2" cy="6" r="4.7" fill="#dcdcdc" fill-opacity=".7" stroke="#a8870a" stroke-width="2.5"/><circle cx="6.2" cy="6" r="4.7" fill="none" stroke="#f6d822" stroke-width="1.5"/><path d="M9.8 9.8 L13.8 14" stroke="#a8870a" stroke-width="3.3" stroke-linecap="round"/><path d="M9.8 9.8 L13.8 14" stroke="#f6d822" stroke-width="2.1" stroke-linecap="round"/></svg>
 <span class="t" style="left:48px;top:102px;letter-spacing:.25px;width:66px;overflow:hidden">All Materials</span>
 <svg style="left:30px;top:116px" width="16" height="16" viewBox="0 0 16 16"><circle cx="6.2" cy="6" r="4.7" fill="#dcdcdc" fill-opacity=".7" stroke="#a8870a" stroke-width="2.5"/><circle cx="6.2" cy="6" r="4.7" fill="none" stroke="#f6d822" stroke-width="1.5"/><path d="M9.8 9.8 L13.8 14" stroke="#a8870a" stroke-width="3.3" stroke-linecap="round"/><path d="M9.8 9.8 L13.8 14" stroke="#f6d822" stroke-width="2.1" stroke-linecap="round"/></svg>
 <span class="t" style="left:48px;top:118px;letter-spacing:.25px;width:66px;overflow:hidden">All Models</span>
 <svg style="left:30px;top:132px" width="16" height="16" viewBox="0 0 16 16"><circle cx="6.2" cy="6" r="4.7" fill="#dcdcdc" fill-opacity=".7" stroke="#a8870a" stroke-width="2.5"/><circle cx="6.2" cy="6" r="4.7" fill="none" stroke="#f6d822" stroke-width="1.5"/><path d="M9.8 9.8 L13.8 14" stroke="#a8870a" stroke-width="3.3" stroke-linecap="round"/><path d="M9.8 9.8 L13.8 14" stroke="#f6d822" stroke-width="2.1" stroke-linecap="round"/></svg>
 <span class="t" style="left:48px;top:134px;letter-spacing:.25px;width:66px;overflow:hidden">All Prefabs</span>
 <div style="left:0;top:162px;width:114px;height:16px;background:#3d7de0"></div>
 <svg style="left:5px;top:167px" width="9" height="8" viewBox="0 0 9 8"><path d="M0 0 H9 L4.5 8Z" fill="#2a4e9c"/></svg>
 <svg style="left:16px;top:164px" width="16" height="14" viewBox="0 0 16 14"><defs><linearGradient id="fs16164" x1="0" y1="0" x2="0" y2="1"><stop offset="0" stop-color="#8e979b"/><stop offset="1" stop-color="#525c61"/></linearGradient></defs><path d="M1 2.6 Q1 1.4 2.2 1.4 H6 Q6.8 1.4 7.2 2.2 L7.6 3 H14 Q15 3 15 4 V12 Q15 13 14 13 H2 Q1 13 1 12Z" fill="#d9d9d9" stroke="#5d6468" stroke-width=".8"/><path d="M1 5 H15 V12 Q15 13 14 13 H2 Q1 13 1 12Z" fill="url(#fs16164)" stroke="#4a5358" stroke-width=".8"/><rect x="8" y="0" width="8" height="7" rx="1" fill="#2e9bd3"/><path d="M9.6 3.5 H14.4" stroke="#bfe4f6" stroke-width="1.2" stroke-dasharray="1.1 .7"/></svg>
 <span class="t b" style="left:34px;top:165px;color:#fff;letter-spacing:.3px">Assets</span>
 <svg style="left:19px;top:182px" width="8" height="9" viewBox="0 0 8 9"><path d="M0 0 V9 L7.6 4.5Z" fill="#6e6e6e"/></svg>
 <svg style="left:30px;top:180px" width="16" height="14" viewBox="0 0 16 14"><defs><linearGradient id="fs30180" x1="0" y1="0" x2="0" y2="1"><stop offset="0" stop-color="#8e979b"/><stop offset="1" stop-color="#525c61"/></linearGradient></defs><path d="M1 2.6 Q1 1.4 2.2 1.4 H6 Q6.8 1.4 7.2 2.2 L7.6 3 H14 Q15 3 15 4 V12 Q15 13 14 13 H2 Q1 13 1 12Z" fill="#d9d9d9" stroke="#5d6468" stroke-width=".8"/><path d="M1 5 H15 V12 Q15 13 14 13 H2 Q1 13 1 12Z" fill="url(#fs30180)" stroke="#4a5358" stroke-width=".8"/><rect x="8" y="0" width="8" height="7" rx="1" fill="#2e9bd3"/><path d="M12 1.4 V5.6 M9.8 3.5 H14.2" stroke="#fff" stroke-width="1.3"/></svg>
 <span class="t" style="left:48px;top:181px;letter-spacing:.25px">External</span>
 <svg style="left:30px;top:196px" width="16" height="14" viewBox="0 0 16 14"><defs><linearGradient id="fs30196" x1="0" y1="0" x2="0" y2="1"><stop offset="0" stop-color="#8e979b"/><stop offset="1" stop-color="#525c61"/></linearGradient></defs><path d="M1 2.6 Q1 1.4 2.2 1.4 H6 Q6.8 1.4 7.2 2.2 L7.6 3 H14 Q15 3 15 4 V12 Q15 13 14 13 H2 Q1 13 1 12Z" fill="#d9d9d9" stroke="#5d6468" stroke-width=".8"/><path d="M1 5 H15 V12 Q15 13 14 13 H2 Q1 13 1 12Z" fill="url(#fs30196)" stroke="#4a5358" stroke-width=".8"/></svg>
 <span class="t" style="left:48px;top:197px;letter-spacing:.25px">Images</span>
 <svg style="left:30px;top:212px" width="16" height="14" viewBox="0 0 16 14"><defs><linearGradient id="fs30212" x1="0" y1="0" x2="0" y2="1"><stop offset="0" stop-color="#8e979b"/><stop offset="1" stop-color="#525c61"/></linearGradient></defs><path d="M1 2.6 Q1 1.4 2.2 1.4 H6 Q6.8 1.4 7.2 2.2 L7.6 3 H14 Q15 3 15 4 V12 Q15 13 14 13 H2 Q1 13 1 12Z" fill="#d9d9d9" stroke="#5d6468" stroke-width=".8"/><path d="M1 5 H15 V12 Q15 13 14 13 H2 Q1 13 1 12Z" fill="url(#fs30212)" stroke="#4a5358" stroke-width=".8"/></svg>
 <span class="t" style="left:48px;top:213px;letter-spacing:.25px">Materials</span>
 <svg style="left:30px;top:228px" width="16" height="14" viewBox="0 0 16 14"><defs><linearGradient id="fs30228" x1="0" y1="0" x2="0" y2="1"><stop offset="0" stop-color="#8e979b"/><stop offset="1" stop-color="#525c61"/></linearGradient></defs><path d="M1 2.6 Q1 1.4 2.2 1.4 H6 Q6.8 1.4 7.2 2.2 L7.6 3 H14 Q15 3 15 4 V12 Q15 13 14 13 H2 Q1 13 1 12Z" fill="#d9d9d9" stroke="#5d6468" stroke-width=".8"/><path d="M1 5 H15 V12 Q15 13 14 13 H2 Q1 13 1 12Z" fill="url(#fs30228)" stroke="#4a5358" stroke-width=".8"/><rect x="8" y="0" width="8" height="7" rx="1" fill="#2e9bd3"/><path d="M9.6 3.5 H14.4" stroke="#bfe4f6" stroke-width="1.2" stroke-dasharray="1.1 .7"/></svg>
 <span class="t" style="left:48px;top:229px;letter-spacing:.25px">Scenes</span>
 <svg style="left:134.8px;top:48px" width="62" height="56" viewBox="0 -8 62 56" overflow="visible"><defs><linearGradient id="fb0" x1="0" y1="0" x2="0" y2="1"><stop offset="0" stop-color="#788790"/><stop offset=".5" stop-color="#5f6e76"/><stop offset="1" stop-color="#48575e"/></linearGradient><linearGradient id="ft0" x1="0" y1="0" x2="0" y2="12" gradientUnits="userSpaceOnUse"><stop offset="0" stop-color="#f6f6f6"/><stop offset=".55" stop-color="#d4d4d4"/><stop offset="1" stop-color="#a8a8a8"/></linearGradient></defs><path d="M1 46 H55.4" stroke="#6a6a6a" stroke-width="1.4" opacity=".45"/><path d="M0.3 4 L3.2 0.8 Q3.8 0.2 4.6 0.2 H20.4 L23.6 3.4 H53 Q55.8 3.4 55.8 6 V13 H0.3Z" fill="url(#ft0)"/><path d="M0.3 11.8 Q0.3 10 2 10 H21.8 L24.8 7 H54.4 Q56 7 56 8.8 V42 Q56 45 53 45 H3.2 Q0.3 45 0.3 42Z" fill="url(#fb0)"/><path d="M0.6 11 Q0.8 10.4 2 10.4 H22 L25 7.4 H54.4 Q55.6 7.4 55.8 8.4" fill="none" stroke="#93a1a8" stroke-width=".8"/><path d="M0.3 11.8 Q0.3 10 2 10 H21.8 L24.8 7 H54.4 Q56 7 56 8.8 V10 L4 38 L0.3 38Z" fill="#fff" opacity=".07"/><rect x="39" y="-7.2" width="19" height="19" rx="2.6" fill="#2e9aca"/><path d="M48.6 -3.8 V8.6 M42.4 2.4 H54.8" stroke="#fff" stroke-width="2.3"/></svg>
 <span class="t" style="left:122.80000000000001px;top:113px;width:80px;text-align:center;font-size:9.5px;letter-spacing:.4px">External</span>
 <svg style="left:210.8px;top:48px" width="62" height="56" viewBox="0 -8 62 56" overflow="visible"><defs><linearGradient id="fb1" x1="0" y1="0" x2="0" y2="1"><stop offset="0" stop-color="#788790"/><stop offset=".5" stop-color="#5f6e76"/><stop offset="1" stop-color="#48575e"/></linearGradient><linearGradient id="ft1" x1="0" y1="0" x2="0" y2="12" gradientUnits="userSpaceOnUse"><stop offset="0" stop-color="#f6f6f6"/><stop offset=".55" stop-color="#d4d4d4"/><stop offset="1" stop-color="#a8a8a8"/></linearGradient></defs><path d="M1 46 H55.4" stroke="#6a6a6a" stroke-width="1.4" opacity=".45"/><path d="M0.3 4 L3.2 0.8 Q3.8 0.2 4.6 0.2 H20.4 L23.6 3.4 H53 Q55.8 3.4 55.8 6 V13 H0.3Z" fill="url(#ft1)"/><path d="M0.3 11.8 Q0.3 10 2 10 H21.8 L24.8 7 H54.4 Q56 7 56 8.8 V42 Q56 45 53 45 H3.2 Q0.3 45 0.3 42Z" fill="url(#fb1)"/><path d="M0.6 11 Q0.8 10.4 2 10.4 H22 L25 7.4 H54.4 Q55.6 7.4 55.8 8.4" fill="none" stroke="#93a1a8" stroke-width=".8"/><path d="M0.3 11.8 Q0.3 10 2 10 H21.8 L24.8 7 H54.4 Q56 7 56 8.8 V10 L4 38 L0.3 38Z" fill="#fff" opacity=".07"/></svg>
 <span class="t" style="left:198.8px;top:113px;width:80px;text-align:center;font-size:9.5px;letter-spacing:.4px">Images</span>
 <svg style="left:286.8px;top:48px" width="62" height="56" viewBox="0 -8 62 56" overflow="visible"><defs><linearGradient id="fb2" x1="0" y1="0" x2="0" y2="1"><stop offset="0" stop-color="#788790"/><stop offset=".5" stop-color="#5f6e76"/><stop offset="1" stop-color="#48575e"/></linearGradient><linearGradient id="ft2" x1="0" y1="0" x2="0" y2="12" gradientUnits="userSpaceOnUse"><stop offset="0" stop-color="#f6f6f6"/><stop offset=".55" stop-color="#d4d4d4"/><stop offset="1" stop-color="#a8a8a8"/></linearGradient></defs><path d="M1 46 H55.4" stroke="#6a6a6a" stroke-width="1.4" opacity=".45"/><path d="M0.3 4 L3.2 0.8 Q3.8 0.2 4.6 0.2 H20.4 L23.6 3.4 H53 Q55.8 3.4 55.8 6 V13 H0.3Z" fill="url(#ft2)"/><path d="M0.3 11.8 Q0.3 10 2 10 H21.8 L24.8 7 H54.4 Q56 7 56 8.8 V42 Q56 45 53 45 H3.2 Q0.3 45 0.3 42Z" fill="url(#fb2)"/><path d="M0.6 11 Q0.8 10.4 2 10.4 H22 L25 7.4 H54.4 Q55.6 7.4 55.8 8.4" fill="none" stroke="#93a1a8" stroke-width=".8"/><path d="M0.3 11.8 Q0.3 10 2 10 H21.8 L24.8 7 H54.4 Q56 7 56 8.8 V10 L4 38 L0.3 38Z" fill="#fff" opacity=".07"/></svg>
 <span class="t" style="left:274.8px;top:113px;width:80px;text-align:center;font-size:9.5px;letter-spacing:.4px">Materials</span>
 <svg style="left:362.8px;top:48px" width="62" height="56" viewBox="0 -8 62 56" overflow="visible"><defs><linearGradient id="fb3" x1="0" y1="0" x2="0" y2="1"><stop offset="0" stop-color="#788790"/><stop offset=".5" stop-color="#5f6e76"/><stop offset="1" stop-color="#48575e"/></linearGradient><linearGradient id="ft3" x1="0" y1="0" x2="0" y2="12" gradientUnits="userSpaceOnUse"><stop offset="0" stop-color="#f6f6f6"/><stop offset=".55" stop-color="#d4d4d4"/><stop offset="1" stop-color="#a8a8a8"/></linearGradient></defs><path d="M1 46 H55.4" stroke="#6a6a6a" stroke-width="1.4" opacity=".45"/><path d="M0.3 4 L3.2 0.8 Q3.8 0.2 4.6 0.2 H20.4 L23.6 3.4 H53 Q55.8 3.4 55.8 6 V13 H0.3Z" fill="url(#ft3)"/><path d="M0.3 11.8 Q0.3 10 2 10 H21.8 L24.8 7 H54.4 Q56 7 56 8.8 V42 Q56 45 53 45 H3.2 Q0.3 45 0.3 42Z" fill="url(#fb3)"/><path d="M0.6 11 Q0.8 10.4 2 10.4 H22 L25 7.4 H54.4 Q55.6 7.4 55.8 8.4" fill="none" stroke="#93a1a8" stroke-width=".8"/><path d="M0.3 11.8 Q0.3 10 2 10 H21.8 L24.8 7 H54.4 Q56 7 56 8.8 V10 L4 38 L0.3 38Z" fill="#fff" opacity=".07"/><rect x="39" y="-7.2" width="19" height="19" rx="2.6" fill="#2e9aca"/><g fill="#cfeaf8"><circle cx="44.2" cy="2.4" r="1.2"/><circle cx="48.6" cy="2.4" r="1.2"/><circle cx="53" cy="2.4" r="1.2"/></g></svg>
 <span class="t" style="left:350.8px;top:113px;width:80px;text-align:center;font-size:9.5px;letter-spacing:.4px">Scenes</span>
 <div style="left:115px;top:327px;width:568px;height:17px;background:#dedede;border-top:1px solid #9c9c9c"></div>
 <div style="left:612px;top:334px;width:55px;height:3px;border-radius:2px;background:#8a8a8a;border:1px solid #777"></div>
 <div style="left:639px;top:330px;width:11px;height:11px;border-radius:6px;background:linear-gradient(#f4f4f4,#c9c9c9);border:1px solid #666"></div>
</div>
</div>
<!-- INSPECTOR -->
<div id="insp" style="left:688px;top:34px;width:280px;height:808px">
<div class="tab" style="left:-1px;top:0;width:100px;height:17px"></div>
<svg style="left:9px;top:4px" width="10" height="10" viewBox="0 0 10 10"><circle cx="5" cy="5" r="4.6" fill="#333"/><rect x="4.1" y="4.2" width="1.8" height="3.6" fill="#e6e6e6"/><rect x="4.1" y="2" width="1.8" height="1.5" fill="#e6e6e6"/></svg>
<span class="t" style="left:23px;top:3px;letter-spacing:.2px">Inspector</span>
<svg style="left:245px;top:6px" width="9" height="10" viewBox="0 0 9 10"><path d="M2.2 4.6 V2.8 Q2.2 0.8 4.4 0.8 Q6.4 0.8 6.6 2.6" fill="none" stroke="#444" stroke-width="1.1"/><rect x="0.6" y="4.4" width="7" height="4.8" fill="#444"/></svg><svg style="left:260px;top:10px" width="15" height="6" viewBox="0 0 15 6"><path d="M0 1 H5 L2.5 4Z" fill="#444"/><g fill="#444"><rect x="6" y="0" width="8.4" height="1.1"/><rect x="6" y="2.2" width="8.4" height="1.1"/><rect x="6" y="4.4" width="8.4" height="1.1"/></g></svg>
<div style="left:-1px;top:17px;width:1px;height:791px;background:#7c7c7c"></div>
<div class="panel" style="left:0;top:17px;width:278px;height:615px"></div>
<div style="left:0;top:17px;width:278px;height:48px;background:#dedede"></div>
<svg style="left:5px;top:23px" width="24" height="24" viewBox="0 0 24 24"><path d="M12 1.6 L22 5 L21.4 17 L12.6 21.4 L2 16.6 L1.6 5.4Z" fill="#ddd"/><path d="M1.6 5.4 L12 1.6 L22 5 L12.4 9Z" fill="#7ed33a"/><path d="M1.6 5.4 L12.4 9 L12.6 21.4 L2.4 16.6Z" fill="#3f9fe0"/><path d="M12.4 9 L22 5 L21.4 17 L12.6 21.4Z" fill="#e8561f"/><path d="M1.6 5.4 L12 1.6 L22 5 L21.4 17 L12.6 21.4 L2.4 16.6Z" fill="none" stroke="#f2f2f2" stroke-width=".8"/><path d="M1 15.6 H8 L4.5 19.6Z" fill="#222" transform="translate(0 1.4)"/></svg>
<svg style="left:43px;top:26px" width="15" height="13" viewBox="0 0 15 13"><defs><linearGradient id="ck4326" x1="0" y1="0" x2="0" y2="1"><stop offset="0" stop-color="#bcd2f0"/><stop offset="1" stop-color="#6f97d6"/></linearGradient></defs><rect x="0.5" y="1" width="11.4" height="11" rx="2" fill="url(#ck4326)" stroke="#6f7f96" stroke-width="1"/><path d="M2.8 6.6 L5.4 9.8 L11.6 1.4" fill="none" stroke="#0c0c10" stroke-width="2.1" stroke-linejoin="miter"/></svg><div class="fld" style="left:61px;top:24.6px;width:143px;height:15.0px;"></div><span class="t" style="left:64px;top:26.1px;width:139px;overflow:hidden;letter-spacing:.25px">Image</span>
<svg style="left:209px;top:26px" width="13" height="13" viewBox="0 0 13 13"><rect x="0.5" y="0.5" width="12" height="12" rx="2" fill="#e4e4e4" stroke="#6d6d6d" stroke-width="1"/></svg><span class="t" style="left:225.6px;top:26px;letter-spacing:.25px;">Static</span>
<svg style="left:262.5px;top:29px" width="9" height="6" viewBox="0 0 9 6"><path d="M0 0 H9 L4.5 5.6Z" fill="#333"/></svg>
<span class="t" style="left:35px;top:45.6px;letter-spacing:.25px;">Tag</span>
<div class="btn" style="left:61px;top:44px;width:90px;height:15px;border-radius:3px;border-color:#777"></div><span class="t" style="left:67px;top:45px;font-size:10px;letter-spacing:.3px">Untagged</span><svg style="left:141px;top:47px" width="5" height="9" viewBox="0 0 5 9"><path d="M0.4 3.4 H4.6 L2.5 0.6Z M0.4 5.6 H4.6 L2.5 8.4Z" fill="#333"/></svg>
<span class="t" style="left:157px;top:45.6px;letter-spacing:.25px;">Layer</span>
<div class="btn" style="left:196px;top:44px;width:77px;height:15px;border-radius:3px;border-color:#777"></div><span class="t" style="left:202px;top:45px;font-size:10px;letter-spacing:.3px">UI</span><svg style="left:263px;top:47px" width="5" height="9" viewBox="0 0 5 9"><path d="M0.4 3.4 H4.6 L2.5 0.6Z M0.4 5.6 H4.6 L2.5 8.4Z" fill="#333"/></svg>
<svg style="left:4px;top:72px" width="9" height="8" viewBox="0 0 9 8"><path d="M0 0 H9 L4.5 8Z" fill="#6e6e6e"/></svg><svg style="left:14px;top:66px" width="18" height="18" viewBox="702 100 18 18"><g fill="#f2f2f2" stroke="#858585" stroke-width=".9" stroke-linejoin="round"><path d="M703.4 103.6 L707.3 101.2 L709.6 107.5Z"/><path d="M718.8 103.6 L714.9 101.2 L712.6 107.5Z"/><path d="M703.4 114.2 L707.3 116.6 L709.6 110.3Z"/><path d="M718.8 114.2 L714.9 116.6 L712.6 110.3Z"/></g></svg>
<span class="t b" style="left:49.6px;top:70px;letter-spacing:.3px">Rect Transform</span>
<svg style="left:244.6px;top:68px" width="14" height="15" viewBox="0 0 14 15"><path d="M1.6 1.2 L12.8 0.4 V12.6 L10 14.2 L1 13 V2Z" fill="#24406e"/><path d="M2.6 1.9 L12 1.2 V3 L3.4 3.6Z" fill="#e8eef8"/><path d="M3.6 3.2 L11.8 2.2 V12.4 L10 13.4 L3.6 12.6Z" fill="#6f91c7"/><path d="M3.6 3.2 L10 3.4 V13.4 L3.6 12.6Z" fill="#5c80b8"/><text x="4.9" y="11.2" font-size="8" font-weight="bold" fill="#e4ecf8" font-family="DejaVu Sans, sans-serif">?</text></svg><svg style="left:262.6px;top:68.6px" width="14" height="13" viewBox="0 0 14 13"><g transform="translate(5.2 5.4)"><g fill="#1e1e1e"><rect x="-1.1" y="-4.9" width="2.2" height="9.8"/><rect x="-1.1" y="-4.9" width="2.2" height="9.8" transform="rotate(45)"/><rect x="-1.1" y="-4.9" width="2.2" height="9.8" transform="rotate(90)"/><rect x="-1.1" y="-4.9" width="2.2" height="9.8" transform="rotate(135)"/><circle r="3.5"/></g><circle r="1.8" fill="#c6c6c6"/></g><path d="M10 7.6 H13.6 L11.8 11Z" fill="#1e1e1e"/></svg>
<span class="t" style="left:24.6px;top:85.2px;font-size:9px;letter-spacing:.45px;-webkit-text-stroke:.25px #000">center</span>
<span class="t" style="left:-7.6px;top:117px;width:32px;text-align:center;font-size:9px;letter-spacing:.45px;-webkit-text-stroke:.25px #000;transform:rotate(-90deg)">middle</span>
<div style="left:15px;top:99px;width:49px;height:49px;background:#d3d3d3;border:1px solid #7e7e7e"></div>
<svg style="left:15px;top:99px" width="49" height="49" viewBox="703 133 49 49"><rect x="710.5" y="140.5" width="34" height="34" fill="none" stroke="#8c8c8c" stroke-width="1"/><path d="M711 157.5 H744 M727.5 141 V174" stroke="#dc3a32" stroke-width="1"/><rect x="719.5" y="149.5" width="16" height="16" fill="none" stroke="#2c2c2c" stroke-width="1.1"/><circle cx="727.5" cy="157.5" r="1.7" fill="#b8720a"/></svg>
<span class="t" style="left:82.5px;top:86px;letter-spacing:.25px;">Pos X</span>
<span class="t" style="left:147.5px;top:86px;letter-spacing:.25px;">Pos Y</span>
<span class="t" style="left:213.6px;top:86px;letter-spacing:.25px;">Pos Z</span>
<div class="fld" style="left:80.6px;top:101px;width:62.4px;height:15px;"></div><span class="t" style="left:83.6px;top:102.5px;width:58.4px;overflow:hidden;letter-spacing:.25px">1.28</span>
<div class="fld" style="left:145.4px;top:101px;width:63.0px;height:15px;"></div><span class="t" style="left:148.4px;top:102.5px;width:59.0px;overflow:hidden;letter-spacing:.25px">-2.75</span>
<div class="fld" style="left:211.4px;top:101px;width:62.6px;height:15px;"></div><span class="t" style="left:214.4px;top:102.5px;width:58.6px;overflow:hidden;letter-spacing:.25px">0</span>
<span class="t" style="left:82.5px;top:118px;letter-spacing:.25px;">Width</span>
<span class="t" style="left:147.5px;top:118px;letter-spacing:.25px;">Height</span>
<div class="fld" style="left:80.6px;top:132.6px;width:62.4px;height:15.0px;"></div><span class="t" style="left:83.6px;top:134.1px;width:58.4px;overflow:hidden;letter-spacing:.25px">100</span>
<div class="fld" style="left:145.4px;top:132.6px;width:63.0px;height:15.0px;"></div><span class="t" style="left:148.4px;top:134.1px;width:59.0px;overflow:hidden;letter-spacing:.25px">100</span>
<div class="btn" style="left:222.4px;top:130.6px;width:52px;height:17px;border-radius:3px;border-color:#6a6a6a"></div><div class="sep" style="left:248px;top:131.6px;height:15px;background:#6a6a6a"></div><svg style="left:230px;top:133.6px" width="11" height="11" viewBox="0 0 11 11"><rect x="1" y="1" width="9" height="9" fill="none" stroke="#222" stroke-width="1.2" stroke-dasharray="2.2 1.2"/></svg><span class="t" style="left:256.6px;top:132.4px;font-size:10px">R</span>
<svg style="left:4px;top:154px" width="9" height="8" viewBox="0 0 9 8"><path d="M0 0 H9 L4.5 8Z" fill="#6e6e6e"/></svg><span class="t" style="left:15.5px;top:151.6px;letter-spacing:.25px;">Anchors</span>
<span class="t" style="left:30.6px;top:167.6px;letter-spacing:.25px;">Min</span>
<span class="t" style="left:82.5px;top:167.6px;letter-spacing:.25px;">X</span>
<div class="fld" style="left:93.6px;top:166.4px;width:49.4px;height:15.0px;"></div><span class="t" style="left:96.6px;top:167.9px;width:45.4px;overflow:hidden;letter-spacing:.25px">0.5</span>
<span class="t" style="left:147.5px;top:167.6px;letter-spacing:.25px;">Y</span>
<div class="fld" style="left:158.4px;top:166.4px;width:50.0px;height:15.0px;"></div><span class="t" style="left:161.4px;top:167.9px;width:46.0px;overflow:hidden;letter-spacing:.25px">0.5</span>
<span class="t" style="left:30.6px;top:183.8px;letter-spacing:.25px;">Max</span>
<span class="t" style="left:82.5px;top:183.8px;letter-spacing:.25px;">X</span>
<div class="fld" style="left:93.6px;top:182.6px;width:49.4px;height:15.0px;"></div><span class="t" style="left:96.6px;top:184.1px;width:45.4px;overflow:hidden;letter-spacing:.25px">0.5</span>
<span class="t" style="left:147.5px;top:183.8px;letter-spacing:.25px;">Y</span>
<div class="fld" style="left:158.4px;top:182.6px;width:50.0px;height:15.0px;"></div><span class="t" style="left:161.4px;top:184.1px;width:46.0px;overflow:hidden;letter-spacing:.25px">0.5</span>
<span class="t" style="left:15.5px;top:201.8px;letter-spacing:.25px;">Pivot</span>
<span class="t" style="left:82.5px;top:201.8px;letter-spacing:.25px;">X</span>
<div class="fld" style="left:93.6px;top:200.6px;width:49.4px;height:15.0px;"></div><span class="t" style="left:96.6px;top:202.1px;width:45.4px;overflow:hidden;letter-spacing:.25px">0.5</span>
<span class="t" style="left:147.5px;top:201.8px;letter-spacing:.25px;">Y</span>
<div class="fld" style="left:158.4px;top:200.6px;width:50.0px;height:15.0px;"></div><span class="t" style="left:161.4px;top:202.1px;width:46.0px;overflow:hidden;letter-spacing:.25px">0.5</span>
<span class="t" style="left:15.5px;top:227.8px;letter-spacing:.25px;">Rotation</span>
<span class="t" style="left:82.5px;top:227.8px;letter-spacing:.25px;">X</span>
<div class="fld" style="left:93.6px;top:226.6px;width:49.4px;height:15.0px;"></div><span class="t" style="left:96.6px;top:228.1px;width:45.4px;overflow:hidden;letter-spacing:.25px">0</span>
<span class="t" style="left:147.5px;top:227.8px;letter-spacing:.25px;">Y</span>
<div class="fld" style="left:158.4px;top:226.6px;width:50.0px;height:15.0px;"></div><span class="t" style="left:161.4px;top:228.1px;width:46.0px;overflow:hidden;letter-spacing:.25px">0</span>
<span class="t" style="left:213.6px;top:227.8px;letter-spacing:.25px;">Z</span>
<div class="fld" style="left:224.6px;top:226.6px;width:49.4px;height:15.0px;"></div><span class="t" style="left:227.6px;top:228.1px;width:45.4px;overflow:hidden;letter-spacing:.25px">0</span>
<span class="t" style="left:15.5px;top:245.6px;letter-spacing:.25px;">Scale</span>
<span class="t" style="left:82.5px;top:245.6px;letter-spacing:.25px;">X</span>
<div class="fld" style="left:93.6px;top:244.4px;width:49.4px;height:15.0px;"></div><span class="t" style="left:96.6px;top:245.9px;width:45.4px;overflow:hidden;letter-spacing:.25px">0.01037</span>
<span class="t" style="left:147.5px;top:245.6px;letter-spacing:.25px;">Y</span>
<div class="fld" style="left:158.4px;top:244.4px;width:50.0px;height:15.0px;"></div><span class="t" style="left:161.4px;top:245.9px;width:46.0px;overflow:hidden;letter-spacing:.25px">0.02487</span>
<span class="t" style="left:213.6px;top:245.6px;letter-spacing:.25px;">Z</span>
<div class="fld" style="left:224.6px;top:244.4px;width:49.4px;height:15.0px;"></div><span class="t" style="left:227.6px;top:245.9px;width:45.4px;overflow:hidden;letter-spacing:.25px">0.01277</span>
<div style="left:0;top:65px;width:278px;height:1px;background:#747474"></div><div style="left:0;top:66px;width:278px;height:1px;background:#cacaca"></div>
<div style="left:0;top:263.6px;width:278px;height:1px;background:#747474"></div><div style="left:0;top:264.6px;width:278px;height:1px;background:#cacaca"></div>
<div style="left:0;top:283.4px;width:278px;height:1px;background:#747474"></div><div style="left:0;top:284.4px;width:278px;height:1px;background:#cacaca"></div>
<div style="left:0;top:379.6px;width:278px;height:1px;background:#747474"></div><div style="left:0;top:380.6px;width:278px;height:1px;background:#cacaca"></div>
<svg style="left:14px;top:266px" width="18" height="16" viewBox="702 300 18 16"><ellipse cx="711" cy="307.8" rx="7.4" ry="6.4" fill="#d4d4d4" stroke="#e6e6e6" stroke-width="1.1"/><ellipse cx="711" cy="307.8" rx="6.2" ry="5.3" fill="none" stroke="#8e8e8e" stroke-width=".9"/><ellipse cx="711" cy="307.8" rx="4.4" ry="3.8" fill="#e2e2e2" stroke="#9a9a9a" stroke-width=".9"/><circle cx="711" cy="307.8" r="2" fill="#8a8a8a"/></svg>
<span class="t b" style="left:49.6px;top:268.6px;letter-spacing:.3px">Canvas Renderer</span>
<svg style="left:244.6px;top:267.4px" width="14" height="15" viewBox="0 0 14 15"><path d="M1.6 1.2 L12.8 0.4 V12.6 L10 14.2 L1 13 V2Z" fill="#24406e"/><path d="M2.6 1.9 L12 1.2 V3 L3.4 3.6Z" fill="#e8eef8"/><path d="M3.6 3.2 L11.8 2.2 V12.4 L10 13.4 L3.6 12.6Z" fill="#6f91c7"/><path d="M3.6 3.2 L10 3.4 V13.4 L3.6 12.6Z" fill="#5c80b8"/><text x="4.9" y="11.2" font-size="8" font-weight="bold" fill="#e4ecf8" font-family="DejaVu Sans, sans-serif">?</text></svg><svg style="left:262.6px;top:268px" width="14" height="13" viewBox="0 0 14 13"><g transform="translate(5.2 5.4)"><g fill="#1e1e1e"><rect x="-1.1" y="-4.9" width="2.2" height="9.8"/><rect x="-1.1" y="-4.9" width="2.2" height="9.8" transform="rotate(45)"/><rect x="-1.1" y="-4.9" width="2.2" height="9.8" transform="rotate(90)"/><rect x="-1.1" y="-4.9" width="2.2" height="9.8" transform="rotate(135)"/><circle r="3.5"/></g><circle r="1.8" fill="#c6c6c6"/></g><path d="M10 7.6 H13.6 L11.8 11Z" fill="#1e1e1e"/></svg>
<svg style="left:4px;top:290.6px" width="9" height="8" viewBox="0 0 9 8"><path d="M0 0 H9 L4.5 8Z" fill="#6e6e6e"/></svg><svg style="left:16px;top:286px" width="15" height="15" viewBox="0 0 15 15"><rect x="0.6" y="0.6" width="13.8" height="13.8" fill="#e9e9e9" stroke="#f2a431" stroke-width="1.2"/><rect x="1.2" y="1.2" width="6.3" height="6.3" fill="#6b6b6b"/><rect x="7.5" y="7.5" width="6.3" height="6.3" fill="#6b6b6b"/><circle cx="7.5" cy="7.5" r="2.6" fill="none" stroke="#f2a431" stroke-width="1.2"/></svg>
<svg style="left:34px;top:286.8px" width="15" height="13" viewBox="0 0 15 13"><defs><linearGradient id="ck34286.8" x1="0" y1="0" x2="0" y2="1"><stop offset="0" stop-color="#bcd2f0"/><stop offset="1" stop-color="#6f97d6"/></linearGradient></defs><rect x="0.5" y="1" width="11.4" height="11" rx="2" fill="url(#ck34286.8)" stroke="#6f7f96" stroke-width="1"/><path d="M2.8 6.6 L5.4 9.8 L11.6 1.4" fill="none" stroke="#0c0c10" stroke-width="2.1" stroke-linejoin="miter"/></svg><span class="t b" style="left:49.6px;top:288.4px;letter-spacing:.3px">Image (Script)</span>
<svg style="left:244.6px;top:286.4px" width="14" height="15" viewBox="0 0 14 15"><path d="M1.6 1.2 L12.8 0.4 V12.6 L10 14.2 L1 13 V2Z" fill="#24406e"/><path d="M2.6 1.9 L12 1.2 V3 L3.4 3.6Z" fill="#e8eef8"/><path d="M3.6 3.2 L11.8 2.2 V12.4 L10 13.4 L3.6 12.6Z" fill="#6f91c7"/><path d="M3.6 3.2 L10 3.4 V13.4 L3.6 12.6Z" fill="#5c80b8"/><text x="4.9" y="11.2" font-size="8" font-weight="bold" fill="#e4ecf8" font-family="DejaVu Sans, sans-serif">?</text></svg><svg style="left:262.6px;top:287px" width="14" height="13" viewBox="0 0 14 13"><g transform="translate(5.2 5.4)"><g fill="#1e1e1e"><rect x="-1.1" y="-4.9" width="2.2" height="9.8"/><rect x="-1.1" y="-4.9" width="2.2" height="9.8" transform="rotate(45)"/><rect x="-1.1" y="-4.9" width="2.2" height="9.8" transform="rotate(90)"/><rect x="-1.1" y="-4.9" width="2.2" height="9.8" transform="rotate(135)"/><circle r="3.5"/></g><circle r="1.8" fill="#c6c6c6"/></g><path d="M10 7.6 H13.6 L11.8 11Z" fill="#1e1e1e"/></svg>
<span class="t" style="left:15.5px;top:304.4px;letter-spacing:.25px;">Source Image</span>
<div class="fld" style="left:133.6px;top:302.8px;width:122.4px;height:14.6px;"></div><span class="t" style="left:136.6px;top:304.3px;width:118.4px;overflow:hidden;letter-spacing:.25px">None (Sprite)</span>
<span class="t" style="left:15.5px;top:321.8px;letter-spacing:.25px;">Color</span>
<div style="left:133.6px;top:320.8px;width:122.4px;height:14.6px;background:#fff;border:1px solid #555;border-bottom:2px solid #333"></div>
<span class="t" style="left:15.5px;top:340.2px;letter-spacing:.25px;">Material</span>
<div class="fld" style="left:133.6px;top:338.8px;width:122.4px;height:14.6px;"></div><span class="t" style="left:136.6px;top:340.3px;width:118.4px;overflow:hidden;letter-spacing:.25px">None (Material)</span>
<span class="t" style="left:15.5px;top:358.2px;letter-spacing:.25px;">Raycast Target</span>
<svg style="left:134px;top:357.8px" width="15" height="13" viewBox="0 0 15 13"><defs><linearGradient id="ck134357.8" x1="0" y1="0" x2="0" y2="1"><stop offset="0" stop-color="#bcd2f0"/><stop offset="1" stop-color="#6f97d6"/></linearGradient></defs><rect x="0.5" y="1" width="11.4" height="11" rx="2" fill="url(#ck134357.8)" stroke="#6f7f96" stroke-width="1"/><path d="M2.8 6.6 L5.4 9.8 L11.6 1.4" fill="none" stroke="#0c0c10" stroke-width="2.1" stroke-linejoin="miter"/></svg><svg style="left:263px;top:305.4px" width="9" height="9" viewBox="0 0 9 9"><circle cx="4.5" cy="4.5" r="3.4" fill="none" stroke="#333" stroke-width=".9"/><circle cx="4.5" cy="4.5" r="1" fill="#333"/></svg><svg style="left:263px;top:341.4px" width="9" height="9" viewBox="0 0 9 9"><circle cx="4.5" cy="4.5" r="3.4" fill="none" stroke="#333" stroke-width=".9"/><circle cx="4.5" cy="4.5" r="1" fill="#333"/></svg><svg style="left:259.6px;top:320px" width="14" height="15" viewBox="0 0 14 15"><path d="M1.4 13.6 L2 11 L8 5 L9.8 6.8 L3.8 12.8Z" fill="#d9d9d9" stroke="#333" stroke-width=".9"/><path d="M7.4 3.6 L11.2 7.4 M8.6 4.8 L11 2.2 Q12.4 1 13 2.4 Q13.4 3.4 12.4 4.2 L10 6.2" fill="#333" stroke="#333" stroke-width="1.2"/></svg>
<div style="left:0;top:380.6px;width:278px;height:44px;background:linear-gradient(#dcdcdc,#d3d3d3)"></div>
<div style="left:15px;top:385.6px;width:32px;height:33px;background:#fff"></div>
<span class="t" style="left:55.4px;top:387px;font-size:12px;line-height:14px;height:14px;letter-spacing:.3px">Default UI Material</span>
<svg style="left:242.6px;top:386px" width="14" height="15" viewBox="0 0 14 15"><path d="M1.6 1.2 L12.8 0.4 V12.6 L10 14.2 L1 13 V2Z" fill="#24406e"/><path d="M2.6 1.9 L12 1.2 V3 L3.4 3.6Z" fill="#e8eef8"/><path d="M3.6 3.2 L11.8 2.2 V12.4 L10 13.4 L3.6 12.6Z" fill="#6f91c7"/><path d="M3.6 3.2 L10 3.4 V13.4 L3.6 12.6Z" fill="#5c80b8"/><text x="4.9" y="11.2" font-size="8" font-weight="bold" fill="#e4ecf8" font-family="DejaVu Sans, sans-serif">?</text></svg><svg style="left:261.6px;top:386.6px" width="14" height="13" viewBox="0 0 14 13"><g transform="translate(5.2 5.4)"><g fill="#1e1e1e"><rect x="-1.1" y="-4.9" width="2.2" height="9.8"/><rect x="-1.1" y="-4.9" width="2.2" height="9.8" transform="rotate(45)"/><rect x="-1.1" y="-4.9" width="2.2" height="9.8" transform="rotate(90)"/><rect x="-1.1" y="-4.9" width="2.2" height="9.8" transform="rotate(135)"/><circle r="3.5"/></g><circle r="1.8" fill="#c6c6c6"/></g><path d="M10 7.6 H13.6 L11.8 11Z" fill="#1e1e1e"/></svg>
<svg style="left:4.6px;top:411px" width="8" height="9" viewBox="0 0 8 9"><path d="M0 0 V9 L7.6 4.5Z" fill="#6e6e6e"/></svg><span class="t" style="left:55.4px;top:407px;letter-spacing:.25px;color:#6f6f6f">Shader</span>
<div class="btn" style="left:103.6px;top:406px;width:168.6px;height:14px;border-radius:3px;border-color:#9a9a9a;background:linear-gradient(#ececec,#d4d4d4)"></div><span class="t" style="left:109.6px;top:406.6px;font-size:9.5px;letter-spacing:.35px;color:#6f6f6f">UI/Default</span><svg style="left:261px;top:411.6px" width="5" height="4" viewBox="0 0 5 4"><path d="M0 0 H5 L2.5 3.4Z" fill="#777"/></svg>
<div style="left:0;top:424.4px;width:278px;height:1px;background:#8e8e8e"></div>
<div style="left:0;top:429.4px;width:278px;height:1px;background:#8e8e8e"></div>
<div class="btn" style="left:21.4px;top:440.2px;width:229.4px;height:22.6px;border-radius:3px;border-color:#5a5a5a"></div>
<span class="t" style="left:21.4px;top:444px;width:229.4px;text-align:center;font-size:12px;line-height:14px;height:14px;letter-spacing:.3px">Add Component</span>
<div style="left:0;top:631.6px;width:278px;height:17.4px;background:linear-gradient(#7a7a7a,#585858 50%,#4a4a4a);border-top:1px solid #3c3c3c;border-bottom:1px solid #2c2c2c"></div>
<span class="t b" style="left:8.6px;top:634.4px;color:#f4f4f4;letter-spacing:.35px;text-shadow:0 1px 0 #222">Image</span>
<svg style="left:55px;top:636px" width="5" height="9" viewBox="0 0 5 9"><path d="M0.4 3.4 H4.6 L2.5 0.6Z M0.4 5.6 H4.6 L2.5 8.4Z" fill="#c9c9c9"/></svg>
<div style="left:62px;top:633px;width:1px;height:15px;background:#3a3a3a"></div><div style="left:63px;top:633px;width:1px;height:15px;background:#858585"></div>
<div style="left:65.6px;top:638.6px;width:205px;height:4px;border-top:1px solid #a9a9a9;border-bottom:1px solid #a9a9a9;background:#555"></div>
<div style="left:0;top:649px;width:278px;height:158.6px;background:#313131;box-shadow:inset 0 2px 3px #1e1e1e"></div>
<span class="t b" style="left:0;top:776px;width:278px;text-align:center;color:#fff;font-size:10.5px;letter-spacing:.5px;text-shadow:0 1px 1px #000,0 0 2px #000">Image</span>
<span class="t b" style="left:0;top:788.6px;width:278px;text-align:center;color:#fff;font-size:10.5px;letter-spacing:.5px;text-shadow:0 1px 1px #000,0 0 2px #000">Image Size: 0x0</span>
</div>
<!-- window chrome -->
<div style="left:0;top:0;width:968px;height:2px;background:#f3f3f3"></div>
<div style="left:194px;top:0;width:78px;height:1px;background:#bcd8f4"></div>
<div style="left:0;top:0;width:1px;height:865px;background:#1b7bd6"></div>
<div style="left:966px;top:2px;width:1px;height:863px;background:#1b7bd6"></div>
<div style="left:967px;top:2px;width:1px;height:864px;background:#c6bfb9"></div>
<div style="left:0;top:864px;width:967px;height:1px;background:#1b7bd6"></div>
<div style="left:0;top:865px;width:968px;height:1px;background:#d6d0ca"></div>
</body>
</html>
